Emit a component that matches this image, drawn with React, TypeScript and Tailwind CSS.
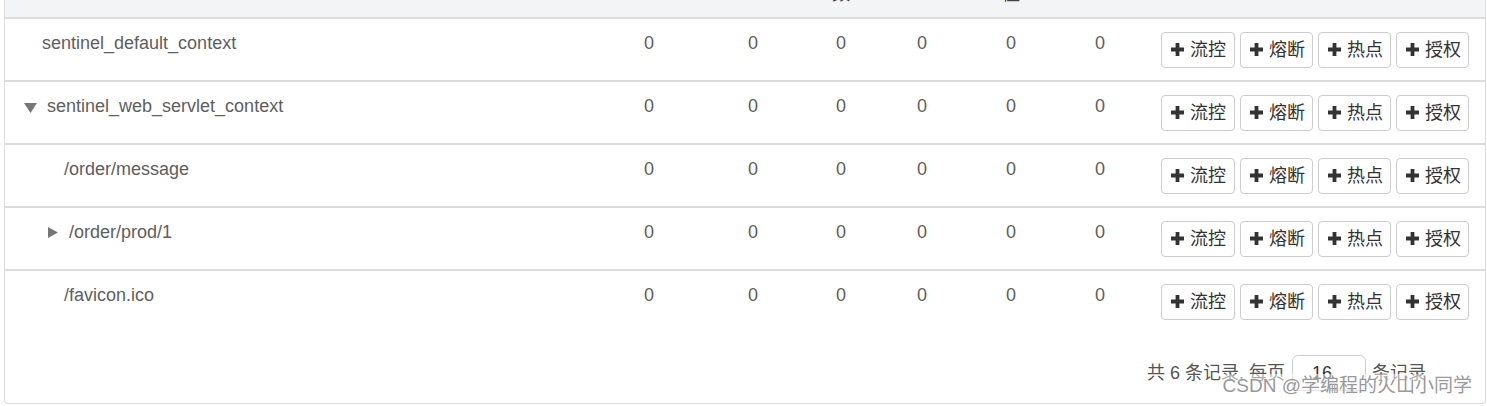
const latin = "font-['Liberation_Sans','Noto_Sans_CJK_SC',sans-serif]";

interface IResourceRow {
    name: string;
    indent: string;
    arrow?: 'down' | 'right';
}

const rows: IResourceRow[] = [
    { name: 'sentinel_default_context', indent: 'pl-[37px]' },
    { name: 'sentinel_web_servlet_context', indent: 'pl-[19px]', arrow: 'down' },
    { name: '/order/message', indent: 'pl-[59px]' },
    { name: '/order/prod/1', indent: 'pl-[43px]', arrow: 'right' },
    { name: '/favicon.ico', indent: 'pl-[59px]' },
];

const cols = 'grid grid-cols-[592px_104px_104px_72px_90px_88px_90px_1fr]';

const PlusIcon = () => (
    <svg width="13" height="13" viewBox="0 0 13 13" className="shrink-0">
        <path d="M4.6 0h3.8v4.6H13v3.8H8.4V13H4.6V8.4H0V4.6h4.6z" fill="#333" />
    </svg>
);

const ActionButton = ({ label, w }: { label: string; w: string }) => (
    <button className={`${w} h-[36px] flex items-center pl-[9px] gap-[6px] border border-[#ccc] rounded-[4px] bg-white text-[18px] leading-none text-[#333]`}>
        <PlusIcon />
        <span>{label}</span>
    </button>
);

const Arrow = ({ dir }: { dir: 'down' | 'right' }) =>
    dir === 'down' ? (
        <svg width="13" height="10" viewBox="0 0 13 10" className="mt-[4px] mr-[10px] shrink-0">
            <polygon points="0,0 13,0 6.5,10" fill="#777" />
        </svg>
    ) : (
        <svg width="10" height="11" viewBox="0 0 10 11" className="mr-[11px] shrink-0">
            <polygon points="0,0 10,5.5 0,11" fill="#777" />
        </svg>
    );

const TableRow = ({ row, last }: { row: IResourceRow; last: boolean }) => (
    <div className={`${cols} ${last ? 'h-[61px]' : 'h-[63px] border-b-2 border-[#ddd]'} text-[18px] leading-[26px] text-[#5e5e5e]`}>
        <div className={`${row.indent} pt-[11px] flex items-start`}>
            {row.arrow && <div className="h-[26px] flex items-center">
                <Arrow dir={row.arrow} />
            </div>}
            <span>{row.name}</span>
        </div>
        {[0, 1, 2, 3, 4, 5].map(i => (
            <div key={i} className="pt-[11px] text-center">0</div>
        ))}
        <div className="pl-[16px] flex items-center gap-[5px]">
            <ActionButton label="流控" w="w-[74px]" />
            <ActionButton label="熔断" w="w-[73px]" />
            <ActionButton label="热点" w="w-[73px]" />
            <ActionButton label="授权" w="w-[73px]" />
        </div>
    </div>
);

export default function App() {
    return (
        <div className={`${latin} relative w-full h-[406px] bg-white pl-[4px] pr-[1px] overflow-hidden`}>
            <div className="h-[404px] border-l border-r border-b border-[#ddd] rounded-b-[4px] flex flex-col">
                <div className={`${cols} h-[19px] bg-[#f3f4f6] border-b-2 border-[#ddd] overflow-hidden text-[18px] leading-[20px] text-[#444]`}>
                    <div />
                    <div />
                    <div />
                    <div className="text-center -mt-[16px]">数</div>
                    <div />
                    <div className="text-center -mt-[16px]">值</div>
                    <div />
                    <div />
                </div>
                {rows.map((r, i) => (
                    <TableRow key={r.name} row={r} last={i === rows.length - 1} />
                ))}
                <div className="flex-1 flex items-start justify-end pr-[59px] pt-[23px] text-[18px] text-[#555]">
                    <div className="flex items-center h-[36px]">
                        <span>共 6 条记录, 每页</span>
                        <div className="ml-[7px] mr-[6px] w-[74px] h-[36px] border border-[#ccc] rounded-[6px] pl-[19px] flex items-center text-[#333]">
                            16
                        </div>
                        <span>条记录</span>
                    </div>
                </div>
            </div>
            <div className="absolute right-[15px] top-[374px] text-[19px] leading-[24px] text-[#999] bg-white/50">
                CSDN @学编程的火山小同学
            </div>
        </div>
    );
}
